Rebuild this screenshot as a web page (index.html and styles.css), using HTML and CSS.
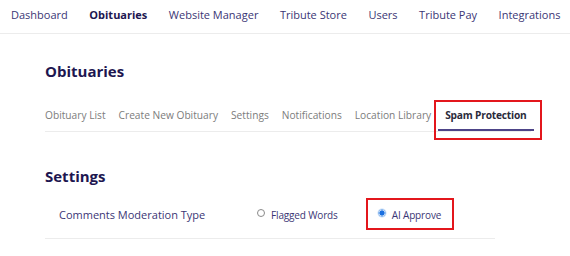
FILE: index.html
```html
<!DOCTYPE html>
<html>
<head>
<meta charset="utf-8">
<link rel="stylesheet" href="styles.css">
</head>
<body>
<nav class="topnav">
  <a class="nav-item">Dashboard</a>
  <a class="nav-item active">Obituaries</a>
  <a class="nav-item">Website Manager</a>
  <a class="nav-item">Tribute Store</a>
  <a class="nav-item">Users</a>
  <a class="nav-item">Tribute Pay</a>
  <a class="nav-item">Integrations</a>
</nav>
<main class="content">
  <h1 class="page-title">Obituaries</h1>
  <div class="tabs">
    <a class="tab">Obituary List</a>
    <a class="tab">Create New Obituary</a>
    <a class="tab">Settings</a>
    <a class="tab">Notifications</a>
    <a class="tab">Location Library</a>
    <a class="tab active"><span class="tab-label">Spam Protection</span><span class="highlight tab-box"></span></a>
  </div>
  <h2 class="section-title">Settings</h2>
  <div class="setting-row">
    <div class="setting-label">Comments Moderation Type</div>
    <div class="options">
      <label class="option"><span class="radio"></span>Flagged Words</label>
      <label class="option selected"><span class="radio checked"></span>AI Approve<span class="highlight option-box"></span></label>
    </div>
  </div>
</main>
</body>
</html>
```
FILE: styles.css
```css
* { box-sizing: border-box; }
body {
  margin: 0;
  font-family: "Open Sans", "Noto Sans", sans-serif;
  background: #fff;
  color: #2b2663;
}
.topnav {
  display: flex;
  gap: 21.5px;
  padding: 0 0 4px 11px;
  height: 34px;
  align-items: center;
  border-bottom: 1px solid #ececec;
  white-space: nowrap;
}
.nav-item {
  font-size: 11px;
  color: #3b3675;
}
.nav-item.active {
  font-weight: 700;
  color: #1d1650;
}
.content {
  padding: 0 0 0 45px;
}
.page-title {
  margin: 0;
  padding-top: 27px;
  font-size: 15px;
  font-weight: 700;
  color: #1d1650;
  line-height: 20px;
}
.tabs {
  display: flex;
  gap: 13px;
  margin-top: 20px;
  width: 486px;
  border-bottom: 1px solid #ececec;
  height: 31px;
  white-space: nowrap;
}
.tab {
  font-size: 10.2px;
  color: #7c7c7c;
  line-height: 28px;
  position: relative;
}
.tab.active {
  font-weight: 700;
  color: #2b2b3b;
  padding: 0 7px;
  margin-left: -6px;
  border-bottom: 2px solid #4d4488;
  height: 30px;
  letter-spacing: -0.2px;
}
.highlight {
  position: absolute;
  border: 2px solid #e3161c;
}
.tab-box {
  left: -4px;
  right: -8px;
  top: -1px;
  bottom: -11px;
}
.section-title {
  margin: 0;
  margin-top: 34px;
  font-size: 15px;
  font-weight: 700;
  color: #1d1650;
  line-height: 20px;
}
.setting-row {
  display: flex;
  align-items: center;
  width: 450px;
  margin-top: 21px;
  padding: 0 0 15px 14px;
  border-bottom: 1px solid #ececec;
}
.setting-label {
  font-size: 11px;
  color: #3b3675;
  width: 198px;
  line-height: 16px;
}
.options {
  display: flex;
  gap: 40px;
}
.option {
  position: relative;
  display: flex;
  align-items: center;
  font-size: 10px;
  letter-spacing: -0.15px;
  color: #3b3675;
  line-height: 14px;
}
.radio {
  width: 8px;
  height: 8px;
  border-radius: 50%;
  border: 1px solid #8a8a8a;
  margin-right: 6px;
  background: #fff;
  margin-top: -4px;
}
.radio.checked {
  border: 1px solid #7fb2ee;
  background: radial-gradient(circle, #1a6fe0 0 2.4px, #fff 2.8px);
  box-shadow: 0 0 0 0.5px #c7dcf7;
}
.option-box {
  left: -12px;
  right: -13px;
  top: -10px;
  bottom: -8px;
}
```
